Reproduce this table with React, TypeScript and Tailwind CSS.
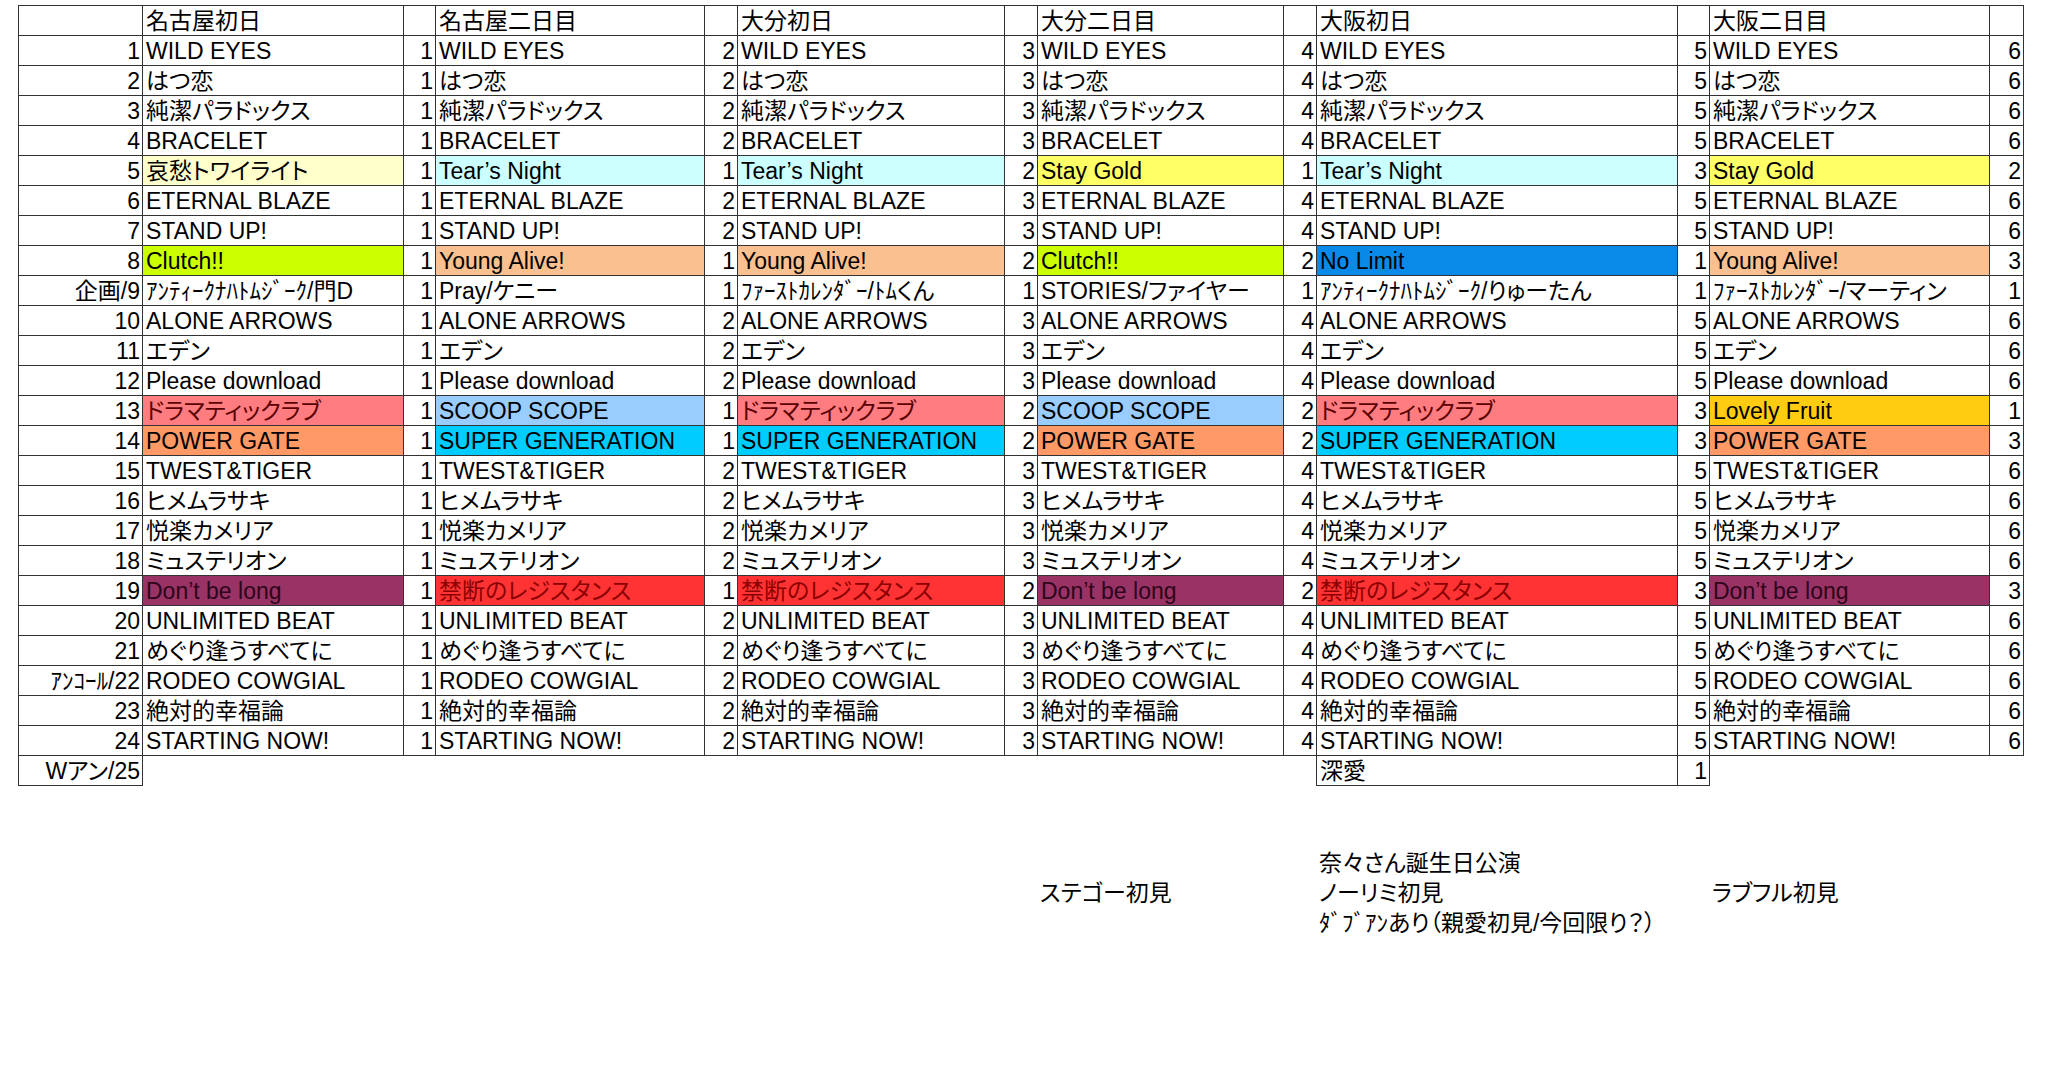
import React from "react";

type Cell = { song: string; count: number; fill?: string; ink?: string };
type Row = { idx: string; cells: Cell[] };

const FONT =
  "font-['Liberation_Sans','Noto_Sans_CJK_JP',sans-serif] [font-feature-settings:'palt']";

const SHOWS = ["名古屋初日", "名古屋二日目", "大分初日", "大分二日目", "大阪初日", "大阪二日目"];

// cell fills
const TWILIGHT = { fill: "bg-[#ffffcc]" };
const TEAR = { fill: "bg-[#ccffff]" };
const STAY = { fill: "bg-[#ffff66]" };
const CLUTCH = { fill: "bg-[#ccff00]" };
const YOUNG = { fill: "bg-[#fac090]" };
const NOLIMIT = { fill: "bg-[#0a8ae8]" };
const DRAMA = { fill: "bg-[#ff7c80]", ink: "text-[#5a0000]" };
const SCOOP = { fill: "bg-[#99ccff]" };
const POWER = { fill: "bg-[#ff9966]" };
const SUPER = { fill: "bg-[#00ccff]" };
const LOVELY = { fill: "bg-[#ffcc11]" };
const KINDAN = { fill: "bg-[#ff3333]", ink: "text-[#8a0000]" };
const DONT = { fill: "bg-[#993366]", ink: "text-[#2e0518]" };

const same = (song: string): Cell[] => [1, 2, 3, 4, 5, 6].map((n) => ({ song, count: n }));

const ROWS: Row[] = [
  { idx: "1", cells: same("WILD EYES") },
  { idx: "2", cells: same("はつ恋") },
  { idx: "3", cells: same("純潔パラドックス") },
  { idx: "4", cells: same("BRACELET") },
  {
    idx: "5",
    cells: [
      { song: "哀愁トワイライト", count: 1, ...TWILIGHT },
      { song: "Tear’s Night", count: 1, ...TEAR },
      { song: "Tear’s Night", count: 2, ...TEAR },
      { song: "Stay Gold", count: 1, ...STAY },
      { song: "Tear’s Night", count: 3, ...TEAR },
      { song: "Stay Gold", count: 2, ...STAY },
    ],
  },
  { idx: "6", cells: same("ETERNAL BLAZE") },
  { idx: "7", cells: same("STAND UP!") },
  {
    idx: "8",
    cells: [
      { song: "Clutch!!", count: 1, ...CLUTCH },
      { song: "Young Alive!", count: 1, ...YOUNG },
      { song: "Young Alive!", count: 2, ...YOUNG },
      { song: "Clutch!!", count: 2, ...CLUTCH },
      { song: "No Limit", count: 1, ...NOLIMIT },
      { song: "Young Alive!", count: 3, ...YOUNG },
    ],
  },
  {
    idx: "企画/9",
    cells: [
      { song: "ｱﾝﾃｨｰｸﾅﾊﾄﾑｼﾞｰｸ/門D", count: 1 },
      { song: "Pray/ケニー", count: 1 },
      { song: "ﾌｧｰｽﾄｶﾚﾝﾀﾞｰ/ﾄﾑくん", count: 1 },
      { song: "STORIES/ファイヤー", count: 1 },
      { song: "ｱﾝﾃｨｰｸﾅﾊﾄﾑｼﾞｰｸ/りゅーたん", count: 1 },
      { song: "ﾌｧｰｽﾄｶﾚﾝﾀﾞｰ/マーティン", count: 1 },
    ],
  },
  { idx: "10", cells: same("ALONE ARROWS") },
  { idx: "11", cells: same("エデン") },
  { idx: "12", cells: same("Please download") },
  {
    idx: "13",
    cells: [
      { song: "ドラマティックラブ", count: 1, ...DRAMA },
      { song: "SCOOP SCOPE", count: 1, ...SCOOP },
      { song: "ドラマティックラブ", count: 2, ...DRAMA },
      { song: "SCOOP SCOPE", count: 2, ...SCOOP },
      { song: "ドラマティックラブ", count: 3, ...DRAMA },
      { song: "Lovely Fruit", count: 1, ...LOVELY },
    ],
  },
  {
    idx: "14",
    cells: [
      { song: "POWER GATE", count: 1, ...POWER },
      { song: "SUPER GENERATION", count: 1, ...SUPER },
      { song: "SUPER GENERATION", count: 2, ...SUPER },
      { song: "POWER GATE", count: 2, ...POWER },
      { song: "SUPER GENERATION", count: 3, ...SUPER },
      { song: "POWER GATE", count: 3, ...POWER },
    ],
  },
  { idx: "15", cells: same("TWEST&TIGER") },
  { idx: "16", cells: same("ヒメムラサキ") },
  { idx: "17", cells: same("悦楽カメリア") },
  { idx: "18", cells: same("ミュステリオン") },
  {
    idx: "19",
    cells: [
      { song: "Don’t be long", count: 1, ...DONT },
      { song: "禁断のレジスタンス", count: 1, ...KINDAN },
      { song: "禁断のレジスタンス", count: 2, ...KINDAN },
      { song: "Don’t be long", count: 2, ...DONT },
      { song: "禁断のレジスタンス", count: 3, ...KINDAN },
      { song: "Don’t be long", count: 3, ...DONT },
    ],
  },
  { idx: "20", cells: same("UNLIMITED BEAT") },
  { idx: "21", cells: same("めぐり逢うすべてに") },
  { idx: "ｱﾝｺｰﾙ/22", cells: same("RODEO COWGIAL") },
  { idx: "23", cells: same("絶対的幸福論") },
  { idx: "24", cells: same("STARTING NOW!") },
];

const B = "border border-[#333]";
const SONG = "pl-[3px] text-left whitespace-nowrap overflow-hidden align-middle";
const NUM = "pr-[2px] text-right whitespace-nowrap align-middle";

function Cols() {
  return (
    <colgroup>
      <col className="w-[124px]" />
      <col className="w-[261px]" />
      <col className="w-[32px]" />
      <col className="w-[269px]" />
      <col className="w-[33px]" />
      <col className="w-[267px]" />
      <col className="w-[33px]" />
      <col className="w-[246px]" />
      <col className="w-[33px]" />
      <col className="w-[361px]" />
      <col className="w-[32px]" />
      <col className="w-[280px]" />
      <col className="w-[34px]" />
    </colgroup>
  );
}

export default function App() {
  return (
    <div className={`w-[2048px] h-[1091px] bg-white overflow-hidden text-black text-[23px] leading-[26px] ${FONT}`}>
      <table className="ml-[18px] mt-[5px] w-[2005px] table-fixed border-collapse">
        <Cols />
        <tbody>
          <tr className="h-[30px]">
            <td className={B}></td>
            {SHOWS.map((s) => (
              <React.Fragment key={s}>
                <td className={`${B} ${SONG}`}>{s}</td>
                <td className={B}></td>
              </React.Fragment>
            ))}
          </tr>
          {ROWS.map((r) => (
            <tr key={r.idx} className="h-[30px]">
              <td className={`${B} ${NUM}`}>{r.idx}</td>
              {r.cells.map((c, i) => (
                <React.Fragment key={i}>
                  <td className={`${B} ${SONG} ${c.fill ?? ""} ${c.ink ?? ""}`}>{c.song}</td>
                  <td className={`${B} ${NUM}`}>{c.count}</td>
                </React.Fragment>
              ))}
            </tr>
          ))}
          <tr className="h-[30px]">
            <td className={`${B} ${NUM}`}>Wアン/25</td>
            <td colSpan={8}></td>
            <td className={`${B} ${SONG}`}>深愛</td>
            <td className={`${B} ${NUM}`}>1</td>
            <td colSpan={2}></td>
          </tr>
        </tbody>
      </table>

      {/* notes under the table */}
      <div className="ml-[18px] mt-[62px] grid grid-cols-[124px_261px_32px_269px_33px_267px_33px_246px_33px_361px_32px_280px_34px] auto-rows-[30px] items-center">
        <div className="col-start-10 pl-[3px] whitespace-nowrap">奈々さん誕生日公演</div>
        <div className="col-start-8 pl-[3px] whitespace-nowrap">ステゴー初見</div>
        <div className="col-start-10 pl-[3px] whitespace-nowrap">ノーリミ初見</div>
        <div className="col-start-12 pl-[3px] whitespace-nowrap">ラブフル初見</div>
        <div className="col-start-10 pl-[3px] whitespace-nowrap">ﾀﾞﾌﾞｱﾝあり（親愛初見/今回限り？）</div>
      </div>
    </div>
  );
}
